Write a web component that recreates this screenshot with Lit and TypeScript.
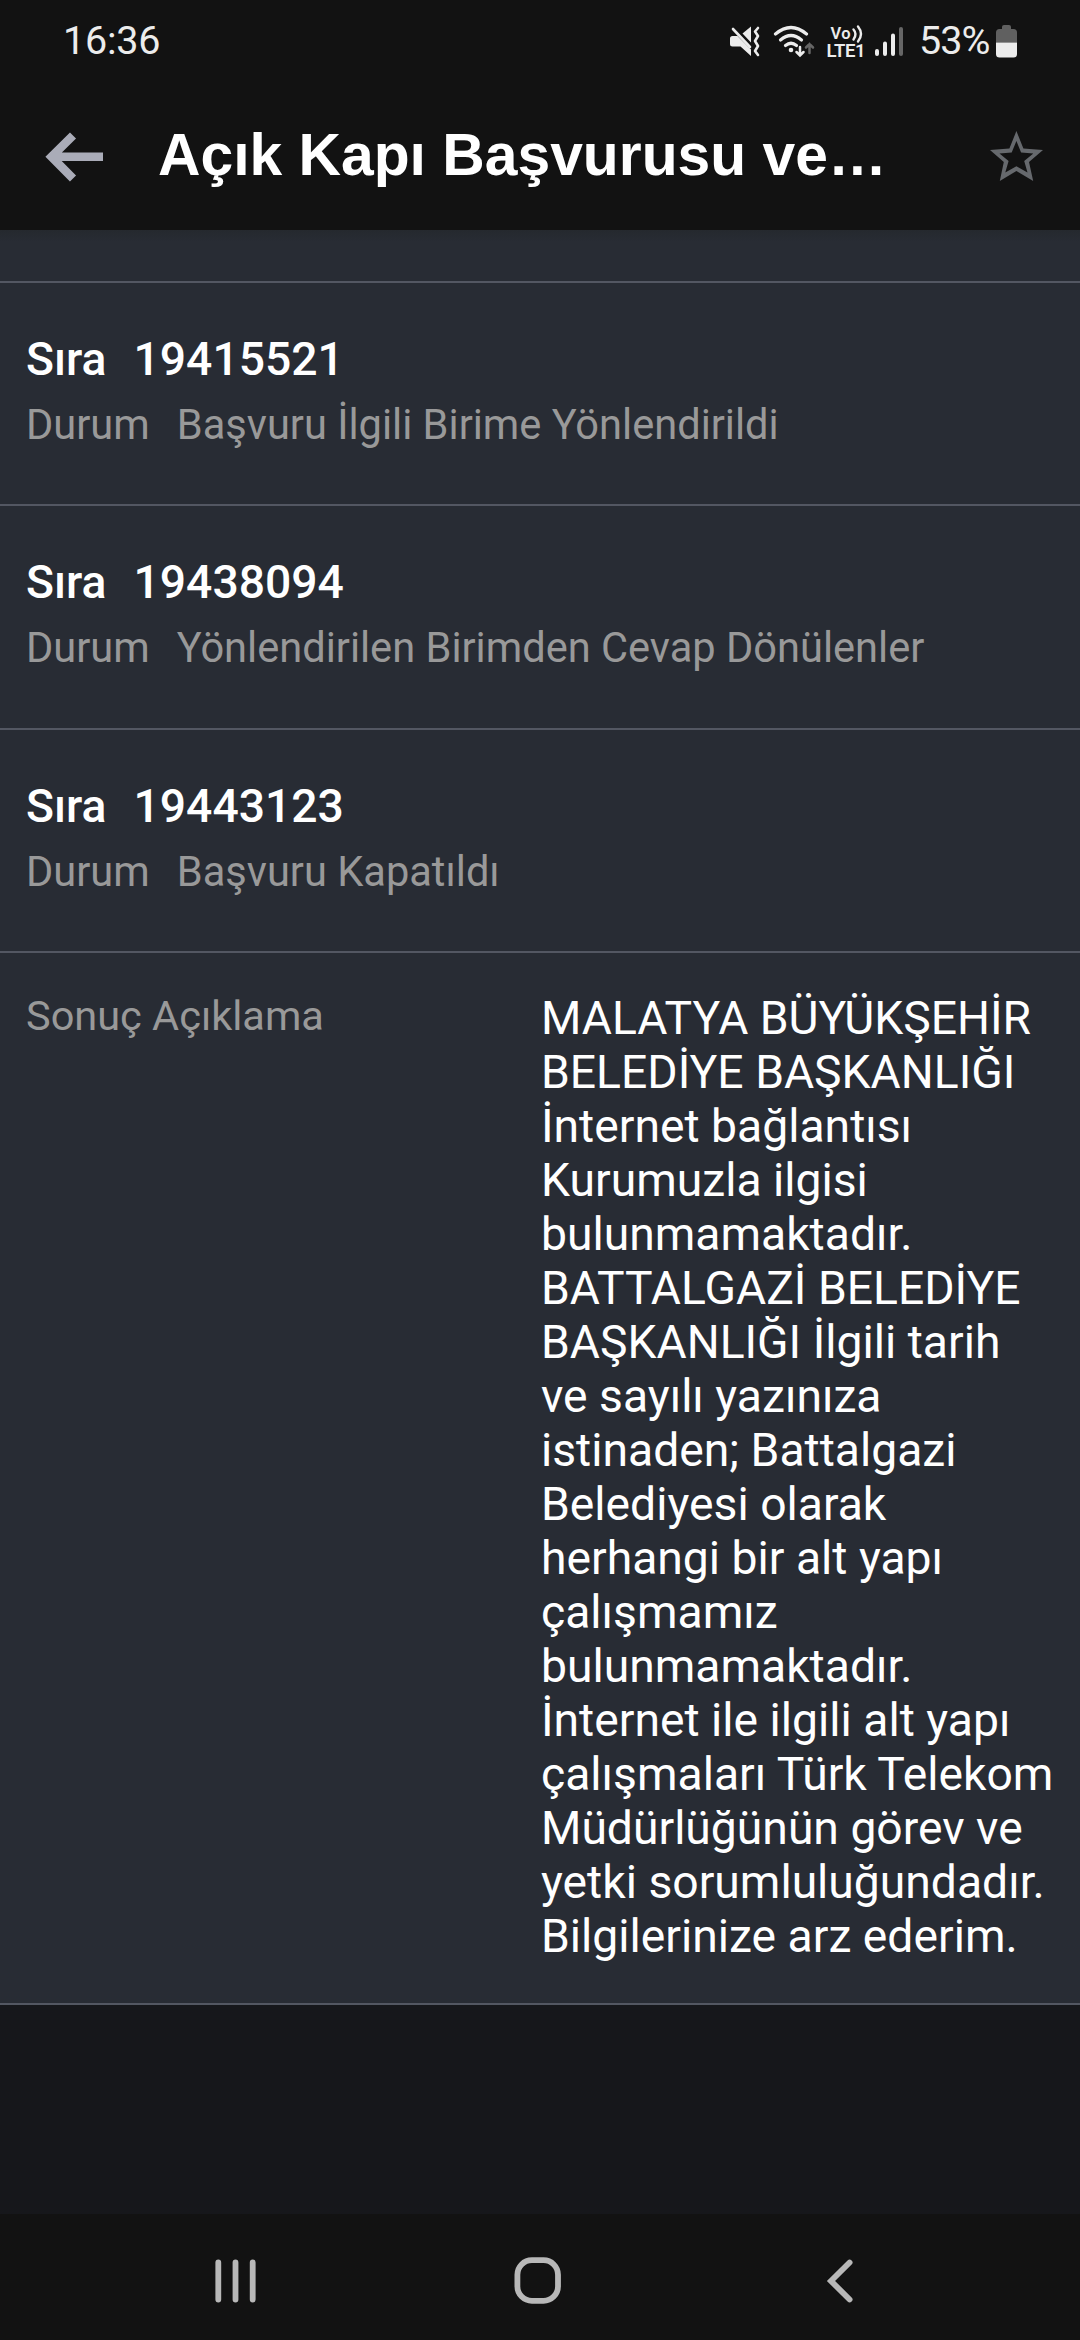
import { LitElement, html, css } from "lit";
import { customElement, property } from "lit/decorators.js";

@customElement("status-bar")
class StatusBar extends LitElement {
  static styles = css`
    :host { display: flex; height: 82px; box-sizing: border-box; padding: 0 63px 0 63px; align-items: center; justify-content: space-between; color: #ececec; font: 400 39.5px/46px Roboto, sans-serif; }
    .icons { display: flex; align-items: center; }
    .clock { letter-spacing: -0.2px; }
    .percent { width: 86px; box-sizing: border-box; padding-left: 9px; letter-spacing: -1px; }
    svg { display: block; }
    .cell { font-family: Roboto, sans-serif; font-weight: 600; }
  `;
  render() {
    return html`
      <span class="clock">16:36</span>
      <div class="icons">
        <svg width="187" height="40" viewBox="723 21 187 40" fill="none">
          <g fill="#ececec">
            <path d="M732.500 36H737.500L751 49.500V56L740.500 46.500H732.500Q730 46.500 730 44V38.500Q730 36 732.500 36Z"/>
            <path d="M742.500 33.500L751 26.500V42.500Z"/>
          </g>
          <path d="M733 29L750 47" stroke="#ececec" stroke-width="2.600" stroke-linecap="round"/>
          <path d="M758 28L755 31.500L758 36L755 41L758 46L755 51L758 55" stroke="#ececec" stroke-width="2.600" stroke-linecap="round" stroke-linejoin="round"/>
          <g stroke="#ececec" stroke-width="3.200" stroke-linecap="round">
            <path d="M775.500 34Q791 21 806.500 34"/><path d="M780.500 40Q791 31 801.500 40"/><path d="M785.500 45.500Q791 41 796.500 45.500"/>
            <path d="M800 47V55M796.500 52L800 55.500L803.500 52" stroke-width="2.500"/>
          </g>
          <circle cx="791" cy="50" r="2.300" fill="#ececec"/>
          <path d="M809.500 53V44M806 47.500L809.500 44L813 47.500" stroke="#666" stroke-width="2.500" stroke-linecap="round"/>
          <g fill="#ececec" class="cell">
            <text x="830.500" y="38.700" font-size="16.500" textLength="20">Vo</text>
            <text x="826.500" y="57" font-size="18.500" textLength="39">LTE1</text>
          </g>
          <path d="M853.500 29.500Q857.500 34 853.500 39.500M858 26.500Q864 34 858 41.500" stroke="#ececec" stroke-width="2.400" stroke-linecap="round"/>
          <g stroke-width="4" stroke-linecap="round">
            <path d="M877 51V54M885 43.500V54M893 35.500V54" stroke="#ececec"/><path d="M901 29V54" stroke="#666"/>
          </g>
        </svg>
        <span class="percent">53%</span>
        <svg width="21" height="34" viewBox="0 0 21 34">
          <path d="M6 5V3Q6 1 8 1H13Q15 1 15 3V5H17.500Q21 5 21 8.500V18.500H0V8.500Q0 5 3.500 5Z" fill="#606060"/>
          <path d="M0 18.500H21V30Q21 33.500 17.500 33.500H3.500Q0 33.500 0 30Z" fill="#ececec"/>
        </svg>
      </div>`;
  }
}

@customElement("app-header")
class AppHeader extends LitElement {
  static styles = css`
    :host { display: flex; height: 148px; box-sizing: border-box; padding: 2px 36px 0 44px; align-items: center; }
    .title { flex: 1; margin: 0 0 4px 54px; color: #fff; font: 700 58.800px/68px "Liberation Sans", sans-serif; white-space: nowrap; }
    svg { display: block; }
  `;
  render() {
    return html`
      <svg width="60" height="52" viewBox="44 131 60 52" fill="none" stroke="#aaacb8" stroke-width="8.600">
        <path d="M73 135.500L51.500 156.800L73 178.500M52 156.800H103"/>
      </svg>
      <div class="title">Açık Kapı Başvurusu ve…</div>
      <svg width="56" height="54" viewBox="988 130 56 54">
        <path d="M1016.400 131L1023.400 148.600L1043 150L1029 162L1033.200 181L1016.400 171L999.800 181L1003.800 162L990 150L1009.400 148.600ZM1016.400 141L1011.700 152.500L999.500 153.400L1008.600 161L1005.300 172.500L1016.400 166.300L1027.500 172.500L1024.200 161L1033.300 153.400L1021.100 152.500Z" fill="#66696d" fill-rule="evenodd"/>
      </svg>`;
  }
}

@customElement("record-row")
class RecordRow extends LitElement {
  @property() number = "";
  @property() status = "";
  static styles = css`
    :host { display: block; height: 223.333px; box-sizing: border-box; padding: 49px 26px 0; border-bottom: 2px solid #535762; }
    .line { display: flex; gap: 27px; white-space: nowrap; }
    .main { color: #fff; font: 500 46.250px/54px Roboto, sans-serif; }
    .sub { margin-top: 14px; color: #999; font: 400 41.600px/50px Roboto, sans-serif; }
  `;
  render() {
    return html`
      <div class="line main"><span>Sıra</span><span>${this.number}</span></div>
      <div class="line sub"><span>Durum</span><span>${this.status}</span></div>`;
  }
}

@customElement("nav-bar")
class NavBar extends LitElement {
  static styles = css`
    :host { display: flex; justify-content: space-between; align-items: center; height: 126px; box-sizing: border-box; padding: 7px 226px 0 214px; background: #121212; }
    svg { display: block; fill: none; stroke: #b8b8b8; stroke-linecap: round; }
    .home { margin-right: 8px; }
  `;
  render() {
    return html`
      <svg width="44" height="48" viewBox="0 0 44 48" stroke-width="5.800"><path d="M4.300 5.500V42.500M21.500 5.500V42.500M38.700 5.500V42.500"/></svg>
      <svg class="home" width="48" height="48" viewBox="0 0 48 48" stroke-width="5.800"><rect x="3.400" y="3.200" width="40.600" height="40.600" rx="14.500"/></svg>
      <svg width="28" height="48" viewBox="0 0 28 48" stroke-width="5.800"><path d="M23.600 5.500L5 24L23.600 42.500"/></svg>`;
  }
}

const records = [
  { number: "19415521", status: "Başvuru İlgili Birime Yönlendirildi" },
  { number: "19438094", status: "Yönlendirilen Birimden Cevap Dönülenler" },
  { number: "19443123", status: "Başvuru Kapatıldı" },
];

const resultLines = [
  "MALATYA BÜYÜKŞEHİR", "BELEDİYE BAŞKANLIĞI", "İnternet bağlantısı", "Kurumuzla ilgisi",
  "bulunmamaktadır.", "BATTALGAZİ BELEDİYE", "BAŞKANLIĞI İlgili tarih", "ve sayılı yazınıza",
  "istinaden; Battalgazi", "Belediyesi olarak", "herhangi bir alt yapı", "çalışmamız",
  "bulunmamaktadır.", "İnternet ile ilgili alt yapı", "çalışmaları Türk Telekom",
  "Müdürlüğünün görev ve", "yetki sorumluluğundadır.", "Bilgilerinize arz ederim.",
];

@customElement("app-root")
class AppRoot extends LitElement {
  static styles = css`
    :host { display: flex; flex-direction: column; width: 1080px; height: 2340px; overflow: hidden; background: #121212; }
    .content { flex: 1; background: #16171b; }
    .list { background: #282c34; }
    .stub { height: 53px; box-sizing: border-box; border-bottom: 2px solid #535762; background: linear-gradient(#25292e, #282c34 12px); }
    .result { display: flex; height: 1052px; box-sizing: border-box; padding: 38px 0 0 26px; border-bottom: 2px solid #535762; }
    .label { width: 515px; color: #999; font: 400 41.500px/50px Roboto, sans-serif; }
    .value { color: #fff; font: 400 46.250px/54px Roboto, sans-serif; white-space: pre; }
  `;
  render() {
    return html`
      <status-bar></status-bar>
      <app-header></app-header>
      <div class="content">
        <div class="list">
          <div class="stub"></div>
          ${records.map((r) => html`<record-row .number=${r.number} .status=${r.status}></record-row>`)}
          <div class="result">
            <div class="label">Sonuç Açıklama</div>
            <div class="value">${resultLines.join("\n")}</div>
          </div>
        </div>
      </div>
      <nav-bar></nav-bar>`;
  }
}
